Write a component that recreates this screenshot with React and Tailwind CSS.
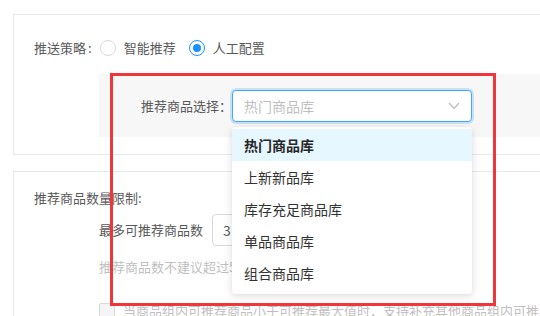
import * as React from 'react';

const LIBS = ['热门商品库', '上新新品库', '库存充足商品库', '单品商品库', '组合商品库'];

function Radio({ checked, children }) {
    return (
        <label className="flex items-center mr-[13px]">
            <span className={`w-4 h-4 rounded-full border bg-white flex items-center justify-center ${checked ? 'border-[#1890ff]' : 'border-[#d9d9d9]'}`}>
                {checked && <span className="w-2 h-2 rounded-full bg-[#1890ff]" />}
            </span>
            <span className="ml-2 text-[13px] leading-5 text-[#595959]">{children}</span>
        </label>
    );
}

export default function App() {
    return (
        <div className="relative w-[540px] h-[316px] overflow-hidden bg-white font-['Noto_Sans_CJK_SC',sans-serif]">
            <div className="pt-[14px] pl-[13px]">
                {/* 推送策略 */}
                <div className="h-[141px] border-l border-t border-b border-[#e8e8e8] pt-[23px]">
                    <div className="flex items-center pl-5">
                        <span className="text-[13px] leading-5 text-[#595959]">推送策略<span className="ml-[2px] mr-[8px]">:</span></span>
                        <Radio>智能推荐</Radio>
                        <Radio checked>人工配置</Radio>
                    </div>
                    <div className="mt-4 ml-[85px] h-[63px] bg-[#f7f7f7] flex items-center pl-[42px]">
                        <span className="text-[13px] leading-5 text-[#595959] w-[91px]">推荐商品选择：</span>
                        <div className="w-[240px] h-[32px] rounded border border-[#40a9ff] bg-white shadow-[0_0_0_2px_rgba(24,144,255,0.2)] flex items-center justify-between pl-[11px] pr-[11px]">
                            <span className="text-[14px] leading-5 text-[#bfbfbf]">热门商品库</span>
                            <svg width="12" height="8" viewBox="0 0 12 8" fill="none">
                                <polyline points="1,1 6,6.5 11,1" stroke="#bfbfbf" strokeWidth="1.3" />
                            </svg>
                        </div>
                    </div>
                </div>

                {/* 推荐商品数量限制 */}
                <div className="mt-4 h-[200px] border-l border-t border-[#e8e8e8] pt-4">
                    <div className="pl-5 text-[13px] leading-5 text-[#595959]">推荐商品数量限制:</div>
                    <div className="mt-[6px] ml-[85px] flex items-center">
                        <span className="text-[13px] leading-5 text-[#595959]">最多可推荐商品数</span>
                        <div className="ml-[9px] w-[90px] h-[32px] rounded border border-[#d9d9d9] flex items-center pl-[10px] text-[14px] text-[#595959]">3</div>
                    </div>
                    <div className="mt-[11px] ml-[85px] text-[13px] leading-5 text-[#bfbfbf] whitespace-nowrap">推荐商品数不建议超过5个</div>
                    <div className="mt-[24px] ml-[85px] flex items-center whitespace-nowrap">
                        <span className="w-4 h-4 rounded-[2px] border border-[#d9d9d9] bg-[#f5f5f5] shrink-0" />
                        <span className="ml-2 text-[13px] leading-5 text-[#bfbfbf]">当商品组内可推荐商品小于可推荐最大值时，支持补充其他商品组内可推荐商品</span>
                    </div>
                </div>
            </div>

            {/* 下拉菜单 */}
            <div className="absolute left-[232px] top-[127px] w-[240px] pt-[2px] pb-[5px] bg-white rounded shadow-[0_2px_8px_rgba(0,0,0,0.15)]">
                {LIBS.map((t, i) => (
                    <div key={t} className={`h-8 flex items-center px-3 text-[14px] ${i === 0 ? 'bg-[#e6f7ff] font-semibold text-[#262626]' : 'text-[#333]'}`}>{t}</div>
                ))}
            </div>

            {/* 标注框 */}
            <div className="absolute left-[110px] top-[73px] w-[386px] h-[233px] border-[3px] border-[#f0353b]" />
        </div>
    );
}
